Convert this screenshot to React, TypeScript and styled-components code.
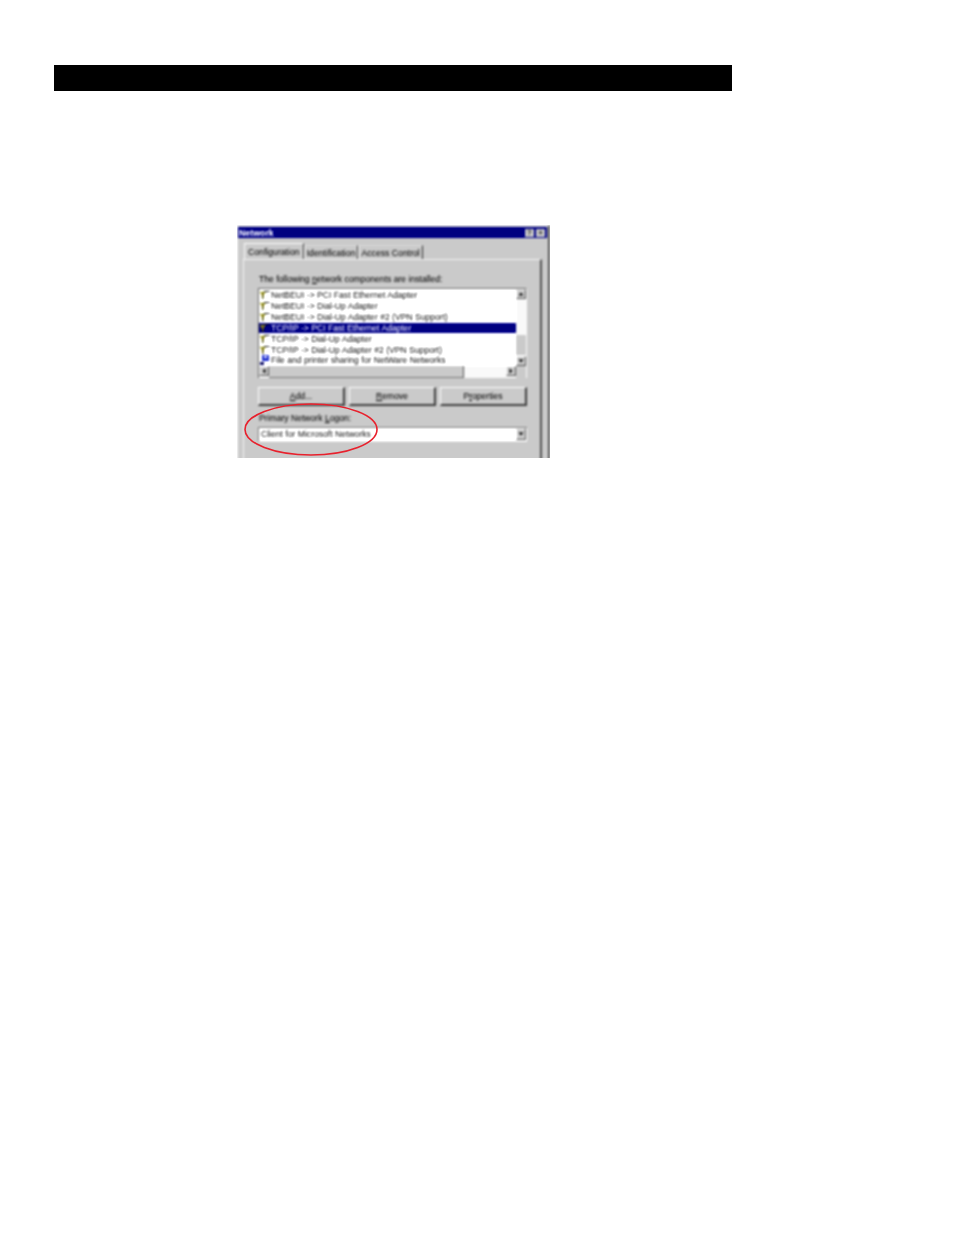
import styled, { createGlobalStyle } from "styled-components";

const GlobalStyle = createGlobalStyle`
  html, body { margin: 0; padding: 0; background: #fff; }
  body { font-family: "Liberation Sans", Arial, sans-serif; }
`;

const Page = styled.div`
  width: 954px;
  height: 1235px;
  padding-top: 65px;
  box-sizing: border-box;
  overflow: hidden;
`;

const HeaderBar = styled.div`
  width: 678px;
  height: 26px;
  margin-left: 54px;
  background: #000;
`;

const Figure = styled.div`
  position: relative;
  width: 313px;
  height: 233px;
  margin: 134px 0 0 237px;
  overflow: hidden;
`;

const Dialog = styled.div`
  width: 313px;
  height: 240px;
  box-sizing: border-box;
  padding: 1px 1px 0 0;
  background: #c2c2c2;
  border-top: 1px solid #d8d8d8;
  border-left: 1px solid #e4e4e4;
  border-right: 2px solid #555;
  overflow: hidden;
  filter: blur(0.8px) contrast(1.12);
  font-size: 8.6px;
  color: #000;
`;

const TitleBar = styled.div`
  height: 11px;
  background: #000080;
  display: flex;
  align-items: center;
  justify-content: space-between;
  padding: 0 2px 0 1px;
  color: #fff;
  font-weight: 700;
  font-size: 8.8px;
`;

const TitleButtons = styled.div`
  display: flex;
  gap: 2px;
`;

const TitleButton = styled.div`
  width: 9px;
  height: 8px;
  background: #c2c2c2;
  color: #222;
  font-size: 7px;
  line-height: 8px;
  text-align: center;
  font-weight: 700;
`;

const Tabs = styled.div`
  display: flex;
  align-items: flex-end;
  height: 21px;
  padding-left: 6px;
`;

const Tab = styled.div<{ $active?: boolean }>`
  height: ${(p) => (p.$active ? 16 : 14)}px;
  line-height: ${(p) => (p.$active ? 17 : 15)}px;
  padding: 0 ${(p) => (p.$active ? 3 : 2)}px;
  box-sizing: border-box;
  border-top: 1px solid ${(p) => (p.$active ? "#f4f4f4" : "#d0d0d0")};
  border-left: 1px solid #f0f0f0;
  border-right: 1px solid #333;
  white-space: nowrap;
  letter-spacing: 0.04px;
`;

const Panel = styled.div`
  height: 220px;
  margin: 0 5px;
  padding: 14px 14px 0 14px;
  box-sizing: border-box;
  border-top: 1px solid #e8e8e8;
  border-left: 1px solid #e8e8e8;
  border-right: 2px solid #555;
`;

const SectionLabel = styled.div`
  height: 10px;
  line-height: 10px;
  padding-left: 1px;
  white-space: nowrap;
`;

const ListFrame = styled.div`
  display: grid;
  grid-template-columns: 1fr 10px;
  grid-template-rows: 77px 12px;
  width: 269px;
  height: 90px;
  margin-top: 4px;
  box-sizing: border-box;
  background: #fff;
  border-top: 1px solid #666;
  border-left: 1px solid #666;
  border-right: 1px solid #eee;
`;

const List = styled.div`
  padding-top: 1px;
  overflow: hidden;
`;

const Row = styled.div<{ $selected?: boolean }>`
  display: flex;
  align-items: center;
  height: 10.85px;
  gap: 1px;
  white-space: nowrap;
  background: ${(p) => (p.$selected ? "#000080" : "transparent")};
  color: ${(p) => (p.$selected ? "#fff" : "#000")};
`;

const RowIcon = styled.svg`
  width: 11px;
  height: 10px;
  flex: none;
`;

const VerticalTrack = styled.div`
  display: flex;
  flex-direction: column;
  justify-content: space-between;
  background: #ececec;
`;

const Thumb = styled.div`
  flex: 1;
  margin: 35px 0 1px;
  background: #c2c2c2;
  border-top: 1px solid #eee;
`;

const ArrowButton = styled.div`
  width: 10px;
  height: 10px;
  flex: none;
  display: flex;
  align-items: center;
  justify-content: center;
  box-sizing: border-box;
  background: #c2c2c2;
  border-top: 1px solid #f0f0f0;
  border-left: 1px solid #f0f0f0;
  border-right: 1px solid #555;
  border-bottom: 1px solid #555;
`;

const Arrow = styled.svg`
  width: 6px;
  height: 6px;
`;

const HorizontalTrack = styled.div`
  display: flex;
  background: #ececec;
`;

const HorizontalThumb = styled.div`
  width: 194px;
  background: #c2c2c2;
  border-right: 1px solid #555;
  border-bottom: 1px solid #777;
`;

const TrackGap = styled.div`
  flex: 1;
`;

const Corner = styled.div`
  background: #c2c2c2;
`;

const ButtonRow = styled.div`
  display: flex;
  justify-content: space-between;
  width: 269px;
  margin-top: 9px;
`;

const PushButton = styled.div`
  width: 87px;
  height: 19px;
  line-height: 17px;
  box-sizing: border-box;
  text-align: center;
  background: #c2c2c2;
  border-top: 1px solid #f2f2f2;
  border-left: 1px solid #f2f2f2;
  border-right: 2px solid #444;
  border-bottom: 2px solid #444;
`;

const Key = styled.span`
  text-decoration: underline;
`;

const LogonLabel = styled(SectionLabel)`
  margin-top: 7px;
`;

const ComboBox = styled.div`
  display: flex;
  justify-content: space-between;
  align-items: center;
  width: 269px;
  height: 15px;
  margin-top: 4px;
  padding: 0 1px 1px 2px;
  box-sizing: border-box;
  background: #fff;
  border-top: 1px solid #777;
  border-left: 1px solid #777;
  border-bottom: 1px solid #ddd;
  white-space: nowrap;
`;

const ComboArrow = styled(ArrowButton)`
  height: 12px;
`;

const Highlight = styled.svg`
  position: absolute;
  left: 5px;
  top: 176px;
  width: 138px;
  height: 57px;
  filter: blur(0.4px);
`;

const NetworkIcon = () => (
  <RowIcon viewBox="0 0 11 10">
    <path d="M1 2.5h5.5" stroke="#8a8a20" strokeWidth="1.3" />
    <path d="M2 3h3.5l-1 3.5h-1.5z" fill="#d8c830" />
    <path d="M3.8 3v6" stroke="#4c4c10" strokeWidth="1.5" />
    <path d="M5 1.5h5.5" stroke="#222" strokeWidth="1.1" />
  </RowIcon>
);

const ShareIcon = () => (
  <RowIcon viewBox="0 0 11 10">
    <rect x="3" y="0" width="7" height="6" fill="#2030c0" />
    <rect x="5" y="1" width="3" height="2" fill="#e8e8ff" />
    <rect x="1" y="7" width="4" height="3" fill="#101060" />
  </RowIcon>
);

const UpArrow = () => (
  <Arrow viewBox="0 0 6 6">
    <path d="M3 1.5 5.5 4.5H.5z" fill="#111" />
  </Arrow>
);

const DownArrow = () => (
  <Arrow viewBox="0 0 6 6">
    <path d="M3 4.5 5.5 1.5H.5z" fill="#111" />
  </Arrow>
);

const LeftArrow = () => (
  <Arrow viewBox="0 0 6 6">
    <path d="M1.5 3 4.5.5v5z" fill="#111" />
  </Arrow>
);

const RightArrow = () => (
  <Arrow viewBox="0 0 6 6">
    <path d="M4.5 3 1.5.5v5z" fill="#111" />
  </Arrow>
);

const components = [
  { label: "NetBEUI -> PCI Fast Ethernet Adapter" },
  { label: "NetBEUI -> Dial-Up Adapter" },
  { label: "NetBEUI -> Dial-Up Adapter #2 (VPN Support)" },
  { label: "TCP/IP -> PCI Fast Ethernet Adapter", selected: true },
  { label: "TCP/IP -> Dial-Up Adapter" },
  { label: "TCP/IP -> Dial-Up Adapter #2 (VPN Support)" },
  { label: "File and printer sharing for NetWare Networks", share: true },
];

export default function App() {
  return (
    <Page>
      <GlobalStyle />
      <HeaderBar />
      <Figure>
        <Dialog>
          <TitleBar>
            Network
            <TitleButtons>
              <TitleButton>?</TitleButton>
              <TitleButton>×</TitleButton>
            </TitleButtons>
          </TitleBar>
          <Tabs>
            <Tab $active>Configuration</Tab>
            <Tab>Identification</Tab>
            <Tab>Access Control</Tab>
          </Tabs>
          <Panel>
            <SectionLabel>
              The following <Key>n</Key>etwork components are installed:
            </SectionLabel>
            <ListFrame>
              <List>
                {components.map((c) => (
                  <Row key={c.label} $selected={c.selected}>
                    {c.share ? <ShareIcon /> : <NetworkIcon />}
                    {c.label}
                  </Row>
                ))}
              </List>
              <VerticalTrack>
                <ArrowButton>
                  <UpArrow />
                </ArrowButton>
                <Thumb />
                <ArrowButton>
                  <DownArrow />
                </ArrowButton>
              </VerticalTrack>
              <HorizontalTrack>
                <ArrowButton>
                  <LeftArrow />
                </ArrowButton>
                <HorizontalThumb />
                <TrackGap />
                <ArrowButton>
                  <RightArrow />
                </ArrowButton>
              </HorizontalTrack>
              <Corner />
            </ListFrame>
            <ButtonRow>
              <PushButton>
                <Key>A</Key>dd...
              </PushButton>
              <PushButton>
                <Key>R</Key>emove
              </PushButton>
              <PushButton>
                P<Key>r</Key>operties
              </PushButton>
            </ButtonRow>
            <LogonLabel>
              Primary Network <Key>L</Key>ogon:
            </LogonLabel>
            <ComboBox>
              Client for Microsoft Networks
              <ComboArrow>
                <DownArrow />
              </ComboArrow>
            </ComboBox>
          </Panel>
        </Dialog>
        <Highlight viewBox="0 0 138 57">
          <ellipse cx="69" cy="28.5" rx="66" ry="25.5" fill="none" stroke="#e8202c" strokeWidth="1.6" />
        </Highlight>
      </Figure>
    </Page>
  );
}
